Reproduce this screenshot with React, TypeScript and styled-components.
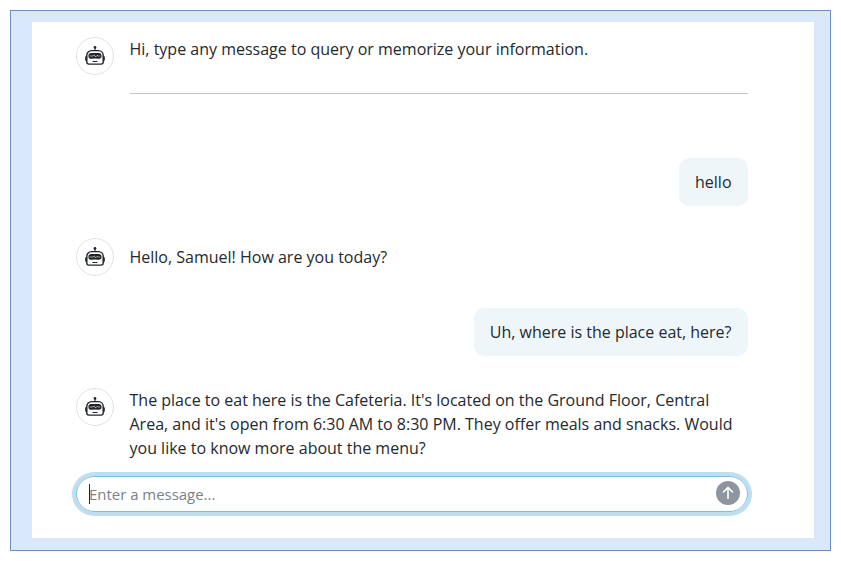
import React from "react";
import styled, { createGlobalStyle } from "styled-components";

const GlobalStyle = createGlobalStyle`
  * { box-sizing: border-box; }
  body {
    margin: 0;
    background: #fff;
    color: #24292e;
    font: 16px/24px "Open Sans", "Noto Sans", sans-serif;
  }
`;

const Page = styled.div`
  height: 561px;
  padding: 10px;
`;

const Frame = styled.main`
  width: 821px;
  height: 541px;
  padding: 11px 16px 12px 21px;
  border: 1px solid #6c8ebf;
  background: #dae8fc;
`;

const Chat = styled.section`
  display: flex;
  flex-direction: column;
  height: 516px;
  padding: 15px 66px 26px 44px;
  background: #fff;
`;

const BotRow = styled.div<{ $gap: number; $center?: boolean }>`
  display: flex;
  align-items: ${(p) => (p.$center ? "center" : "flex-start")};
  gap: 15.5px;
  margin-bottom: ${(p) => p.$gap}px;
`;

const Avatar = styled.div`
  display: flex;
  flex: none;
  align-items: center;
  justify-content: center;
  width: 38px;
  height: 38px;
  border: 1px solid #dee2e6;
  border-radius: 50%;
`;

const BotText = styled.div<{ $divided?: boolean }>`
  flex: 1;
  min-width: 0;
  padding-bottom: ${(p) => (p.$divided ? 32 : 0)}px;
  border-bottom: ${(p) => (p.$divided ? "1px solid #c6c7c8" : "0")};
`;

const UserBubble = styled.div`
  align-self: flex-end;
  margin-bottom: 32px;
  padding: 12px 16.5px 12px 16px;
  border-radius: 10px;
  background: #eff6fa;
`;

const Composer = styled.form`
  display: flex;
  flex: none;
  align-items: center;
  justify-content: space-between;
  height: 36px;
  margin-top: auto;
  padding: 0 7px 2px 12px;
  border: 1px solid #80bde1;
  border-radius: 18px;
  box-shadow: 0 0 0 4px #bfdeef;
`;

const Field = styled.div`
  display: flex;
  align-items: center;
  padding-top: 2px;
  color: #7c8288;
  font-size: 15px;
  letter-spacing: -0.03px;
`;

const Caret = styled.span`
  width: 1px;
  height: 20px;
  margin-right: -1px;
  background: #24292e;
`;

const Send = styled.button`
  display: flex;
  width: 24px;
  height: 24px;
  padding: 0;
  border: 0;
  border-radius: 50%;
  background: #8e959e;
`;

const RobotIcon = () => (
  <svg width="20" height="20" viewBox="0 0 20 20" fill="none" stroke="#212529">
    <circle cx="10" cy="1.4" r="1.35" fill="#212529" stroke="none" />
    <path d="M10 2v3" strokeWidth="1.1" />
    <path d="M1.8 16V9.4a4.8 4.8 0 0 1 4.8-4.8h6.8a4.8 4.8 0 0 1 4.8 4.8V16q0 2.1-2.1 2.1H3.9Q1.8 18.1 1.8 16z" strokeWidth="1.4" />
    <path d="M1.7 10.3v4.6H1.3A1.1 1.1 0 0 1 .2 13.8v-2.4a1.1 1.1 0 0 1 1.1-1.1zM18.3 10.3v4.6h.4a1.1 1.1 0 0 0 1.1-1.1v-2.4a1.1 1.1 0 0 0-1.1-1.1z" fill="#212529" strokeWidth=".3" />
    <path d="M6.3 7.1q3.7-.4 7.4 0 2.9.2 2.9 2.8t-2.9 2.9q-3.7-.7-7.4 0-2.9-.2-2.9-2.9t2.9-2.8z" fill="#212529" stroke="none" />
    <path d="M4.7 10h3.2l1.4-1 1.3 2 1.5-1.7 1 .7h2.2" stroke="#fff" strokeWidth=".6" />
    <path d="M8 15.5h4" strokeWidth="1.2" strokeLinecap="round" />
  </svg>
);

const ArrowIcon = () => (
  <svg width="24" height="24" viewBox="0 0 24 24" fill="none" stroke="#fff" strokeWidth="1.6">
    <path d="M12 18V6.8M7 11.5l5-5 5 5" />
  </svg>
);

const Bot = ({ text, gap, center, divided }: { text: string; gap: number; center?: boolean; divided?: boolean }) => (
  <BotRow $gap={gap} $center={center}>
    <Avatar><RobotIcon /></Avatar>
    <BotText $divided={divided}>{text}</BotText>
  </BotRow>
);

export default function App() {
  return (
    <Page>
      <GlobalStyle />
      <Frame>
        <Chat>
          <Bot divided gap={64} text="Hi, type any message to query or memorize your information." />
          <UserBubble>hello</UserBubble>
          <Bot center gap={32} text="Hello, Samuel! How are you today?" />
          <UserBubble>Uh, where is the place eat, here?</UserBubble>
          <Bot
            gap={0}
            text="The place to eat here is the Cafeteria. It's located on the Ground Floor, Central Area, and it's open from 6:30 AM to 8:30 PM. They offer meals and snacks. Would you like to know more about the menu?"
          />
          <Composer>
            <Field><Caret />Enter a message...</Field>
            <Send type="button" aria-label="Send message"><ArrowIcon /></Send>
          </Composer>
        </Chat>
      </Frame>
    </Page>
  );
}
